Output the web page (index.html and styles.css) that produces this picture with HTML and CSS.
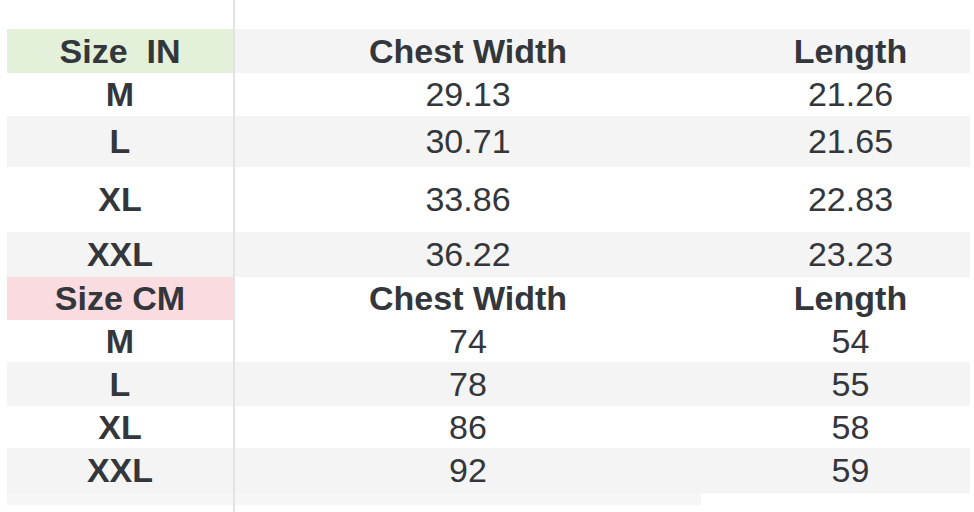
FILE: index.html
```html
<!DOCTYPE html>
<html>
<head>
<meta charset="utf-8">
<link rel="stylesheet" href="styles.css">
</head>
<body>
<div class="sheet">
  <div class="row top"><div class="c1"></div><div class="c2"></div><div class="c3"></div></div>
  <div class="row shade h44 head"><div class="c1 green">Size&nbsp; IN</div><div class="c2">Chest Width</div><div class="c3">Length</div></div>
  <div class="row h43"><div class="c1 lab">M</div><div class="c2">29.13</div><div class="c3">21.26</div></div>
  <div class="row shade h51"><div class="c1 lab">L</div><div class="c2">30.71</div><div class="c3">21.65</div></div>
  <div class="row h65"><div class="c1 lab">XL</div><div class="c2">33.86</div><div class="c3">22.83</div></div>
  <div class="row shade h45"><div class="c1 lab">XXL</div><div class="c2">36.22</div><div class="c3">23.23</div></div>
  <div class="row h43 head"><div class="c1 pink">Size CM</div><div class="c2">Chest Width</div><div class="c3">Length</div></div>
  <div class="row h42"><div class="c1 lab">M</div><div class="c2">74</div><div class="c3">54</div></div>
  <div class="row shade h44"><div class="c1 lab">L</div><div class="c2">78</div><div class="c3">55</div></div>
  <div class="row h42"><div class="c1 lab">XL</div><div class="c2">86</div><div class="c3">58</div></div>
  <div class="row shade h45"><div class="c1 lab">XXL</div><div class="c2">92</div><div class="c3">59</div></div>
  <div class="row tail"><div class="c1"></div><div class="c2"></div><div class="c3"></div></div>
</div>
</body>
</html>
```
FILE: styles.css
```css
html, body {
  margin: 0;
  padding: 0;
  background: #ffffff;
  overflow: hidden;
}
.sheet {
  width: 974px;
  height: 512px;
  display: flex;
  flex-direction: column;
  font-family: "Liberation Sans", Arial, sans-serif;
  font-size: 34px;
  color: #33363b;
}
.row {
  display: flex;
  margin-left: 7px;
  width: 963px;
}
.row > div {
  display: flex;
  align-items: center;
  justify-content: center;
  white-space: nowrap;
}
.c1 {
  width: 226px;
  border-right: 2px solid #e3e3e3;
}
.c2 {
  width: 466px;
}
.c3 {
  flex: 1;
  padding-left: 30px;
}
.top { height: 29px; }
.h42 { height: 42px; }
.h43 { height: 43px; }
.h44 { height: 44px; }
.h45 { height: 45px; }
.h51 { height: 51px; }
.h65 { height: 65px; }
.shade { background: #f4f4f4; }
.head { font-weight: bold; }
.lab { font-weight: bold; }
.green { background: #e3f1da; }
.pink { background: #fadbdf; }
.tail { flex: 1; }
.tail .c1, .tail .c2 {
  background: linear-gradient(#f6f6f6 0, #f6f6f6 12px, transparent 12px);
}
```
